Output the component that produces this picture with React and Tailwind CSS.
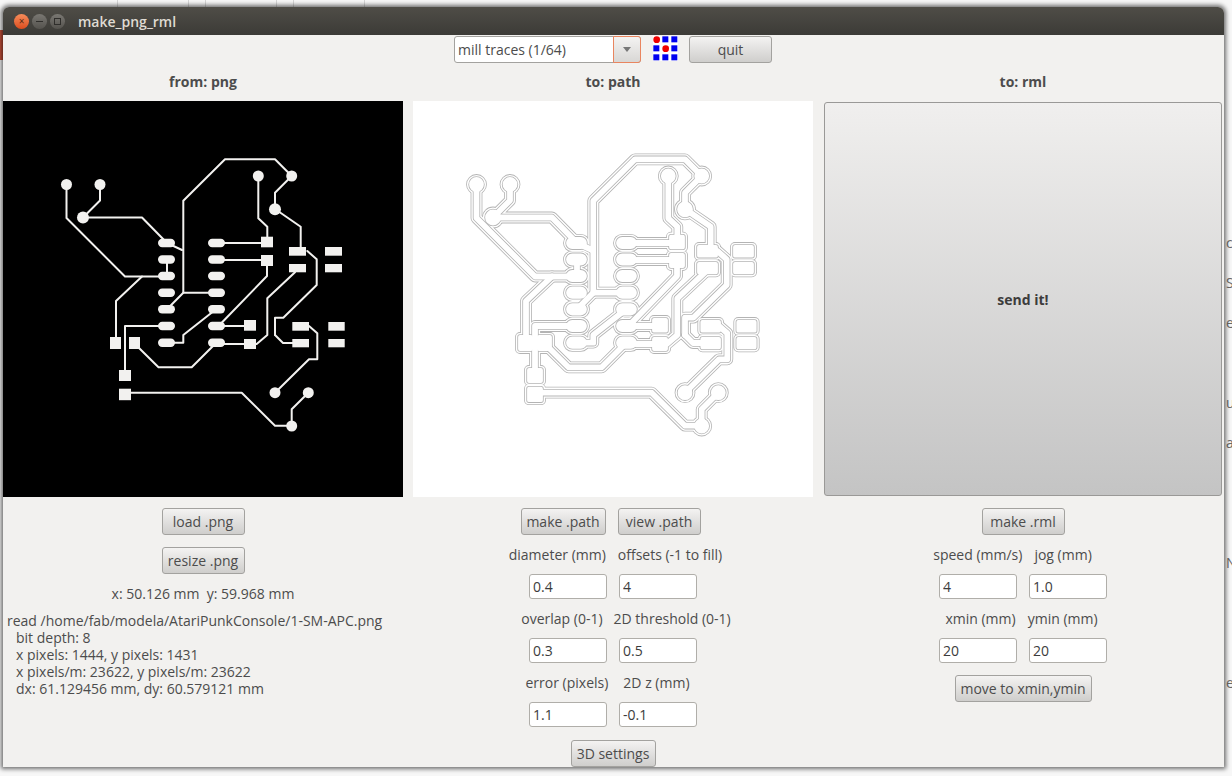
const TRACES = [
    'M100 184 V200.5 L83 217.5 H142 L167 243 L182 250',
    'M66.5 184.5 V218 L125 276.5 H167',
    'M167 259.5 V276',
    'M142 276.5 L116 301 V340',
    'M125 372 V326 H167',
    'M138 347 L158.5 367.3 H191.7 L216 343',
    'M125 392.7 H241.7 L275 425.7 H291.7 V409.3 L308.3 392.7',
    'M275 392.7 L309 359.3 H317.3 V333.3 L309 326',
    'M275 335 V317.7 H283.3 L316.7 285 V259.3 L307.3 251',
    'M275 335 L283 343 H295',
    'M295 272.3 L267.3 298.3 V335 L256.7 344 H216',
    'M267 262 V276 L221.7 322.7',
    'M216 326 H250',
    'M216 243 H267',
    'M216 260 H267',
    'M258.3 176 V218.3 L267.3 226.7 V240',
    'M291.7 176 L275 192.7 V209 L300.7 226.7 V250',
    'M291.7 176 L275 159.3 H225 L183.3 200.7 V292.7 H216',
    'M183.3 292.7 L167 309.3',
    'M216 309.3 L183.3 335 V342.7 H167',
];

const CIRCLES = [
    [66.5, 184.5, 5.5],
    [100, 184.5, 5.5],
    [83, 217.5, 6],
    [258.3, 176, 5.5],
    [291.7, 176, 5.5],
    [275, 209.3, 6],
    [275, 392.7, 5.5],
    [308.3, 392.7, 5.5],
    [291.7, 426, 5.5],
];

const SQUARES = [
    [110, 337, 11, 12],
    [129, 337, 11, 12],
    [119, 370, 12, 11],
    [119, 388.7, 12, 11.5],
    [261, 236.7, 12, 10.6],
    [261, 255, 12, 11],
    [244, 320, 12, 10.7],
    [244, 339, 12, 10],
    [289, 247, 17, 8.7],
    [289, 264, 17, 8.3],
    [325, 247, 17, 8.7],
    [325, 264, 17, 8.3],
    [292.3, 322, 16.7, 8.7],
    [292.3, 339, 16.7, 8.3],
    [328.3, 322, 16.4, 8.7],
    [328.3, 339, 16.4, 8.3],
];

const SOIC_ROWS = [243, 259.5, 276, 292.7, 309.3, 326, 342.7];

function Board({ grow, color }) {
    return (
        <g stroke={color} fill={color} strokeLinejoin="round" strokeLinecap="round">
            {TRACES.map((d) => (
                <path key={d} d={d} fill="none" strokeWidth={2 + grow * 2} />
            ))}
            {CIRCLES.map(([cx, cy, r]) => (
                <circle key={`${cx}-${cy}`} cx={cx} cy={cy} r={r} strokeWidth={grow * 2} />
            ))}
            {SQUARES.map(([x, y, w, h]) => (
                <rect key={`${x}-${y}`} x={x} y={y} width={w} height={h} strokeWidth={grow * 2} />
            ))}
            {SOIC_ROWS.map((y) => (
                <g key={y}>
                    <rect x="158" y={y - 4.2} width="17" height="8.4" rx="4.2" strokeWidth={grow * 2} />
                    <rect x="208" y={y - 4.2} width="17" height="8.4" rx="4.2" strokeWidth={grow * 2} />
                </g>
            ))}
        </g>
    );
}

function Png() {
    return (
        <svg width="400" height="396" viewBox="3 101 400 396" className="block bg-black">
            <Board grow={0} color="#f2f1ef" />
        </svg>
    );
}

function PathPreview() {
    return (
        <svg width="400" height="396" viewBox="3 101 400 396" className="block bg-white">
            <Board grow={4.9} color="#b4b4b4" />
            <Board grow={4.1} color="#ffffff" />
            <Board grow={2.7} color="#b4b4b4" />
            <Board grow={1.9} color="#ffffff" />
        </svg>
    );
}

function Logo() {
    const blue = [
        [27, 0],
        [54, 0],
        [0, 27],
        [54, 27],
        [0, 54],
        [27, 54],
        [54, 54],
    ];

    return (
        <svg width="25" height="25" viewBox="0 0 75 75" className="block bg-white">
            {blue.map(([x, y]) => (
                <rect key={`${x}-${y}`} x={x + 1} y={y + 1} width="18" height="18" fill="#0000f0" />
            ))}
            <circle cx="11" cy="11" r="10" fill="#f00000" />
            <circle cx="38" cy="38" r="10" fill="#f00000" />
        </svg>
    );
}

function Btn({ children, className = '' }) {
    return (
        <button
            type="button"
            className={`h-[27px] rounded-[3px] border border-[#a3a29f] bg-gradient-to-b from-[#f4f3f2] to-[#cfcecc] text-[14px] text-[#4c4c4c] ${className}`}
        >
            {children}
        </button>
    );
}

function Field({ value }) {
    return (
        <input
            type="text"
            readOnly
            value={value}
            className="h-[25px] w-[78px] rounded-[3px] border border-[#b0aea9] bg-white px-[3px] text-[14px] text-[#3c3c3c] outline-none"
        />
    );
}

function Labels({ left, right, className }) {
    return (
        <div className={`mt-[10px] flex h-[20px] items-center justify-center leading-[20px] ${className}`}>
            <span>{left}</span>
            <span>{right}</span>
        </div>
    );
}

function Fields({ left, right, className }) {
    return (
        <div className={`mt-[9px] flex justify-center gap-[12px] ${className}`}>
            <Field value={left} />
            <Field value={right} />
        </div>
    );
}

function Heading({ children }) {
    return (
        <div className="h-[20px] text-center text-[14px] font-bold leading-[20px] text-[#4c4c4c]">
            {children}
        </div>
    );
}

function Backdrop() {
    return (
        <div className="absolute inset-0 overflow-hidden bg-[#f7f7f7] text-[14px] text-[#6a6a6a]">
            <div className="flex h-[7px] pl-[117px]">
                <div className="w-[71px] border-l border-[#d5d5d5]" />
                <div className="w-[17px] border-l border-[#d5d5d5]" />
                <div className="w-[71px] border-l border-[#d5d5d5]" />
                <div className="w-[17px] border-l border-[#d5d5d5]" />
                <div className="w-[72px] border-x border-[#d5d5d5]" />
            </div>
            <div className="absolute left-0 top-[30px] h-[30px] w-[3px] bg-[#c8523a]" />
            <div className="absolute right-[-2px] top-0 flex h-full w-[8px] flex-col">
                <span className="mt-[232px] h-[40px]">cc</span>
                <span className="h-[40px]">S</span>
                <span className="h-[80px]">es</span>
                <span className="h-[40px]">u</span>
                <span className="h-[120px]">a</span>
                <span className="h-[120px]">N</span>
                <span className="h-[40px]">e</span>
            </div>
        </div>
    );
}

export default function App() {
    return (
        <div
            className="relative h-[776px] w-[1232px] overflow-hidden"
            style={{ fontFamily: '"Open Sans", "Noto Sans", sans-serif' }}
        >
            <Backdrop />

            <div className="absolute left-[3px] top-[7px] flex h-[760px] w-[1221px] flex-col overflow-hidden rounded-t-[6px] bg-[#f2f1ef] shadow-[0_0_4px_2px_rgba(0,0,0,0.55)]">
                <div className="flex h-[28px] shrink-0 items-center bg-gradient-to-b from-[#4f4d47] to-[#3c3b37] pl-[11px]">
                    <span className="flex h-[15px] w-[15px] items-center justify-center rounded-full bg-gradient-to-b from-[#f58c5a] to-[#dc4c1c] text-[10px] leading-none text-[#5a2a14]">
                        ×
                    </span>
                    <span className="ml-[3px] flex h-[15px] w-[15px] items-center justify-center rounded-full bg-gradient-to-b from-[#7a7873] to-[#55534e]">
                        <span className="h-[1px] w-[7px] bg-[#2f2e2b]" />
                    </span>
                    <span className="ml-[3px] flex h-[15px] w-[15px] items-center justify-center rounded-full bg-gradient-to-b from-[#7a7873] to-[#55534e]">
                        <span className="h-[7px] w-[7px] border border-[#2f2e2b]" />
                    </span>
                    <span className="ml-[13px] text-[14px] font-semibold text-[#dfdbd2]">
                        make_png_rml
                    </span>
                </div>

                <div className="mt-[1px] flex h-[27px] shrink-0 pl-[451px]">
                    <div className="flex h-[27px] w-[187px] rounded-[3px] border border-[#a3a29f] bg-white">
                        <span className="flex-1 pl-[3px] text-[14px] leading-[25px] text-[#4c4c4c]">
                            mill traces (1/64)
                        </span>
                        <span className="-my-[1px] -mr-[1px] flex w-[28px] items-center justify-center rounded-r-[3px] border border-[#e9855f] bg-gradient-to-b from-[#f4f3f2] to-[#d8d7d5]">
                            <span className="h-0 w-0 border-x-[4px] border-t-[5px] border-x-transparent border-t-[#777]" />
                        </span>
                    </div>
                    <div className="ml-[12px]">
                        <Logo />
                    </div>
                    <Btn className="ml-[11px] w-[83px]">quit</Btn>
                </div>

                <div className="mt-[9px] flex">
                    <div className="flex w-[400px] flex-col items-center">
                        <Heading>from: png</Heading>
                        <div className="mt-[9px]">
                            <Png />
                        </div>
                        <Btn className="mt-[11px] w-[83px]">load .png</Btn>
                        <Btn className="mt-[12px] w-[83px]">resize .png</Btn>
                        <div className="mt-[10px] h-[20px] text-[14px] leading-[20px] text-[#4c4c4c]">
                            x: 50.126 mm&nbsp;&nbsp;y: 59.968 mm
                        </div>
                        <div className="mt-[8px] w-full pl-[4px] text-[14px] leading-[17px] text-[#4c4c4c]">
                            <div>read /home/fab/modela/AtariPunkConsole/1-SM-APC.png</div>
                            <div className="pl-[9px]">
                                <div>bit depth: 8</div>
                                <div>x pixels: 1444, y pixels: 1431</div>
                                <div>x pixels/m: 23622, y pixels/m: 23622</div>
                                <div>dx: 61.129456 mm, dy: 60.579121 mm</div>
                            </div>
                        </div>
                    </div>

                    <div className="ml-[10px] flex w-[400px] flex-col text-[14px] text-[#4c4c4c]">
                        <Heading>to: path</Heading>
                        <div className="mt-[9px]">
                            <PathPreview />
                        </div>
                        <div className="mt-[11px] flex justify-center gap-[12px] pr-[5px]">
                            <Btn className="w-[85px]">make .path</Btn>
                            <Btn className="w-[83px]">view .path</Btn>
                        </div>
                        <Labels left="diameter (mm)" right="offsets (-1 to fill)" className="gap-[12px] pl-[5px]" />
                        <Fields left="0.4" right="4" className="gap-[12px]" />
                        <Labels left="overlap (0-1)" right="2D threshold (0-1)" className="gap-[11px] pl-[26px]" />
                        <Fields left="0.3" right="0.5" className="gap-[12px]" />
                        <Labels left="error (pixels)" right="2D z (mm)" className="gap-[15px] pr-[11px]" />
                        <Fields left="1.1" right="-0.1" className="gap-[12px]" />
                        <div className="mt-[13px] flex justify-center">
                            <Btn className="w-[85px]">3D settings</Btn>
                        </div>
                    </div>

                    <div className="ml-[11px] flex w-[398px] flex-col items-stretch text-[14px] text-[#4c4c4c]">
                        <Heading>to: rml</Heading>
                        <button
                            type="button"
                            className="mt-[10px] h-[394px] w-[398px] rounded-[3px] border border-[#9a9997] bg-gradient-to-b from-[#f0efee] to-[#c4c4c4] text-[14px] font-bold text-[#3c3c3c]"
                        >
                            send it!
                        </button>
                        <div className="mt-[12px] flex justify-center">
                            <Btn className="w-[83px]">make .rml</Btn>
                        </div>
                        <Labels left="speed (mm/s)" right="jog (mm)" className="gap-[12px] pr-[21px]" />
                        <Fields left="4" right="1.0" className="pr-[0px]" />
                        <Labels left="xmin (mm)" right="ymin (mm)" className="gap-[12px] pr-[3px]" />
                        <Fields left="20" right="20" className="pr-[0px]" />
                        <div className="mt-[12px] flex justify-center">
                            <Btn className="w-[137px]">move to xmin,ymin</Btn>
                        </div>
                    </div>
                </div>
            </div>
        </div>
    );
}
